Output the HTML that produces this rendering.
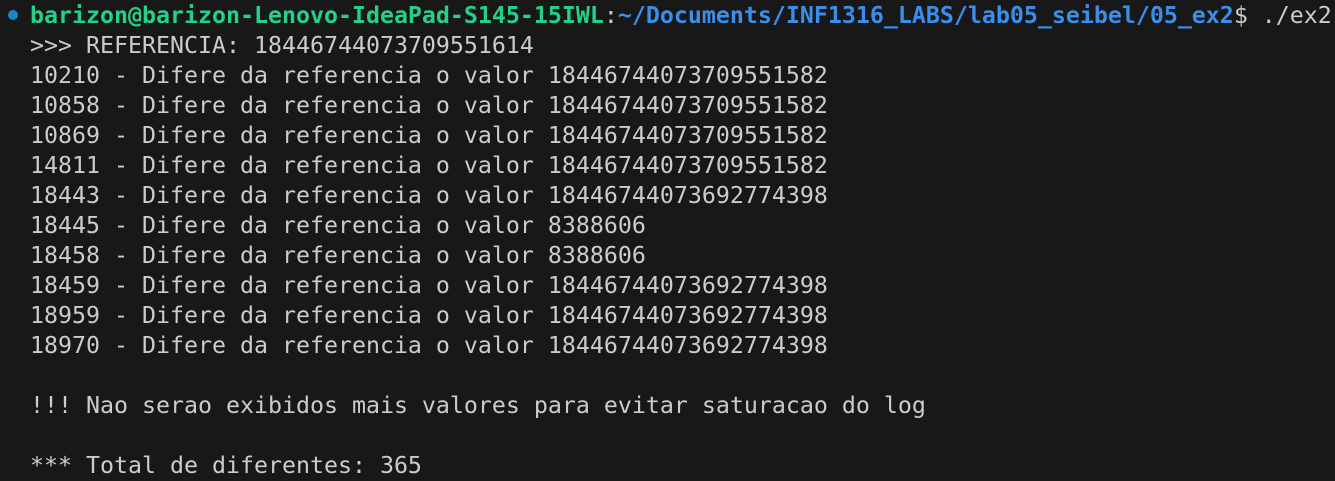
<!DOCTYPE html>
<html><head><meta charset="utf-8"><style>
html,body{margin:0;padding:0;background:#181818;width:1335px;height:479px;overflow:hidden}
.t{position:absolute;left:30px;top:1px;font-family:"DejaVu Sans Mono","Liberation Mono",monospace;font-size:23.25px;line-height:30px;color:#cccccc;white-space:pre}
.p{font-size:23.25px;font-weight:bold}
.g{color:#23d18b}.b{color:#3b8eea}
.dot{position:absolute;left:8px;top:10px;width:10px;height:10px;border-radius:50%;background:#1a85c6}
</style></head><body>
<div class="dot"></div>
<div class="t"><span class="p"><span class="g">barizon@barizon-Lenovo-IdeaPad-S145-15IWL</span><span style="font-weight:normal">:</span><span class="b">~/Documents/INF1316_LABS/lab05_seibel/05_ex2</span><span style="font-weight:normal">$ ./ex2</span></span>
&gt;&gt;&gt; REFERENCIA: 18446744073709551614
10210 - Difere da referencia o valor 18446744073709551582
10858 - Difere da referencia o valor 18446744073709551582
10869 - Difere da referencia o valor 18446744073709551582
14811 - Difere da referencia o valor 18446744073709551582
18443 - Difere da referencia o valor 18446744073692774398
18445 - Difere da referencia o valor 8388606
18458 - Difere da referencia o valor 8388606
18459 - Difere da referencia o valor 18446744073692774398
18959 - Difere da referencia o valor 18446744073692774398
18970 - Difere da referencia o valor 18446744073692774398

!!! Nao serao exibidos mais valores para evitar saturacao do log

*** Total de diferentes: 365</div>
</body></html>
